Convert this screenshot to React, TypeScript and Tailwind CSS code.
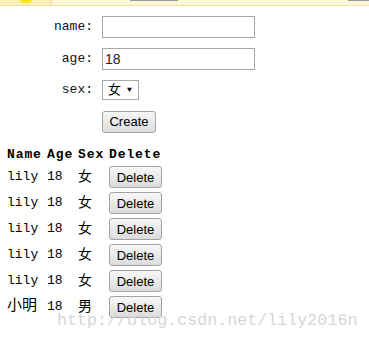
import type { ReactNode } from 'react';

const mono = 'font-["Liberation_Mono","Noto_Sans_CJK_SC",monospace]';
const arial = 'font-["Liberation_Sans","Noto_Sans_CJK_SC",sans-serif]';

const people = [
  { name: 'lily', age: 18, sex: '女' },
  { name: 'lily', age: 18, sex: '女' },
  { name: 'lily', age: 18, sex: '女' },
  { name: 'lily', age: 18, sex: '女' },
  { name: 'lily', age: 18, sex: '女' },
  { name: '小明', age: 18, sex: '男' },
];

// ── Button ────────────────────────────────────────────────────────────────────

function Btn({ children, className = '' }: { children: ReactNode; className?: string }) {
  return (
    <button
      className={`h-[22px] rounded-[3px] border border-[#a3a3a3] bg-gradient-to-b from-[#f7f7f7] to-[#dcdcdc] text-[13px] leading-none text-black ${arial} ${className}`}
    >
      {children}
    </button>
  );
}

// ── Form row ──────────────────────────────────────────────────────────────────

function Field({ label, children }: { label?: string; children: ReactNode }) {
  return (
    <div className="flex items-center">
      <span className="w-[93px] text-right text-[13px] text-[#111]">{label}</span>
      <div className="ml-[9px]">{children}</div>
    </div>
  );
}

export default function App() {
  return (
    <div className={`relative h-[338px] w-[369px] overflow-hidden bg-white ${mono}`}>
      {/* browser info bar */}
      <div className="flex h-[6px] border-b border-[#f2e2a2] bg-[#fdf8d8]">
        <div className="relative w-[52px] border-r border-[#efdca0] bg-[#fcf0b8]">
          <div className="absolute left-[20px] top-[-4px] h-[7px] w-[12px] rounded-full bg-[#f8e81a]" />
        </div>
        <div className="ml-[78px] h-[1px] w-[48px] bg-[#999]" />
        <div className="ml-auto h-[1px] w-[21px] bg-[#999]" />
      </div>

      {/* form */}
      <div className="mt-[10px] flex flex-col gap-[10px]">
        <Field label="name:">
          <input className={`block h-[22px] w-[153px] border border-[#a9a9a9] px-[2px] text-[13px] outline-none ${arial}`} />
        </Field>
        <Field label="age:">
          <input
            defaultValue="18"
            className={`block h-[22px] w-[153px] border border-[#a9a9a9] px-[2px] text-[14px] text-[#1a1a40] outline-none ${arial}`}
          />
        </Field>
        <Field label="sex:">
          <div className="flex h-[20px] w-[37px] items-center gap-[6px] border border-[#a9a9a9] bg-white pl-[5px] text-[13px] text-black">
            <span className="leading-none">女</span>
            <span className="text-[8px] leading-none">▼</span>
          </div>
        </Field>
        <Field>
          <Btn className="w-[54px]">Create</Btn>
        </Field>
      </div>

      {/* table */}
      <div className="mt-[12px] pl-[7px] text-[13px] text-black">
        <div className="flex h-[18px] items-center font-bold tracking-[0.9px]">
          <span className="w-[40px]">Name</span>
          <span className="w-[31px]">Age</span>
          <span className="w-[31px]">Sex</span>
          <span>Delete</span>
        </div>
        <div className="mt-[2px] flex flex-col gap-[4px]">
          {people.map((p, i) => (
            <div key={i} className="flex h-[22px] items-center">
              <span className={`w-[40px] ${p.name === 'lily' ? '' : 'text-[15px]'}`}>{p.name}</span>
              <span className="w-[31px]">{p.age}</span>
              <span className="w-[31px] text-[14px]">{p.sex}</span>
              <Btn className="w-[53px]">Delete</Btn>
            </div>
          ))}
        </div>
      </div>

      {/* watermark */}
      <div className="pointer-events-none absolute left-[57px] top-[308px] text-[16.7px] text-[#d6d6d6]">
        http://blog.csdn.net/lily2016n
      </div>
    </div>
  );
}
